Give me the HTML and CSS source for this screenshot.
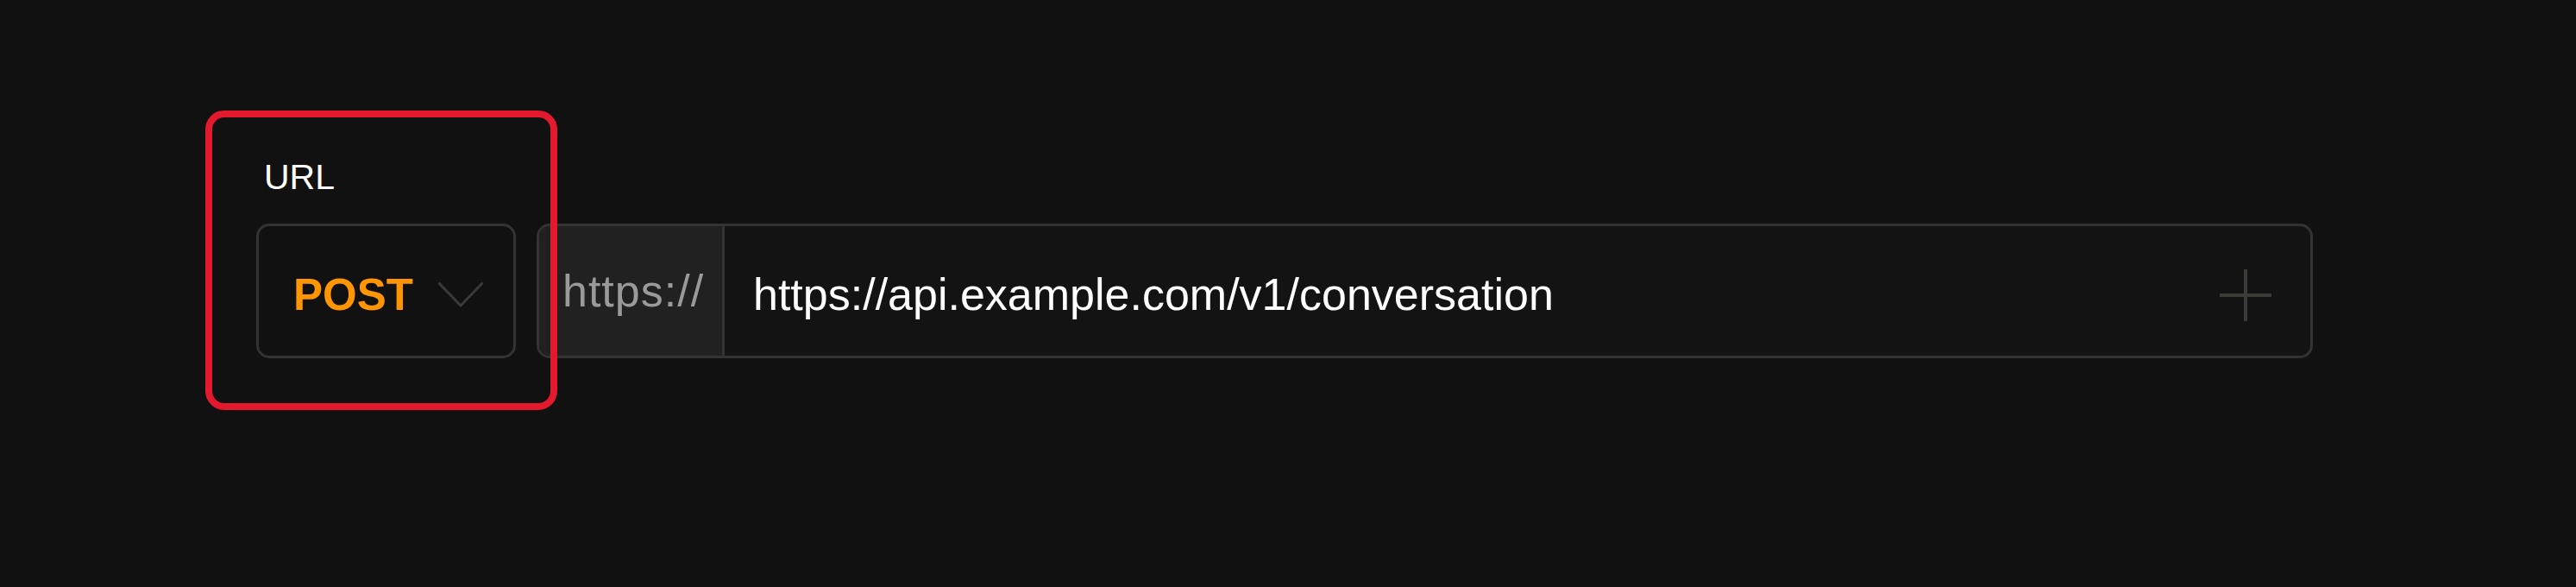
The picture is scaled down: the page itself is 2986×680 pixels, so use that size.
FILE: index.html
```html
<!DOCTYPE html>
<html>
<head>
<meta charset="utf-8">
<link rel="stylesheet" href="styles.css">
</head>
<body>
<div class="page">
  <div class="field">
    <div class="label">URL</div>
    <div class="row">
      <div class="method">
        <span class="method-name">POST</span>
        <svg class="chev" width="54" height="30" viewBox="0 0 54 30"><path d="M1.5 1.5 L27 28 L52.5 1.5" fill="none" stroke="#3a3a3a" stroke-width="3"/></svg>
      </div>
      <div class="url-input">
        <div class="prefix">https://</div>
        <div class="url-text">https://api.example.com/v1/conversation</div>
        <svg class="plus" width="60" height="60" viewBox="0 0 60 60"><path d="M30 1 V59 M1 30 H59" fill="none" stroke="#3b3b38" stroke-width="4" stroke-linecap="round"/></svg>
      </div>
    </div>
  </div>
  <div class="highlight"></div>
</div>
</body>
</html>
```
FILE: styles.css
```css
html, body {
  margin: 0;
  padding: 0;
  background: #111111;
  width: 2986px;
  height: 680px;
  overflow: hidden;
}
.page {
  position: relative;
  width: 2986px;
  height: 680px;
  font-family: "Liberation Sans", Arial, sans-serif;
}
.field {
  padding-top: 181px;
  padding-left: 297px;
  width: 2384px;
}
.label {
  font-size: 41px;
  line-height: 48px;
  color: #ffffff;
  padding-left: 9px;
  height: 78px;
}
.row {
  display: flex;
  gap: 24px;
  height: 156px;
}
.method {
  box-sizing: border-box;
  width: 301px;
  height: 156px;
  border: 3px solid #333333;
  border-radius: 15px;
  display: flex;
  align-items: center;
  padding-left: 40px;
  padding-top: 8px;
  gap: 28px;
}
.method-name {
  color: #ff9500;
  font-weight: bold;
  font-size: 51px;
}
.chev {
  display: block;
}
.url-input {
  box-sizing: border-box;
  flex: 1;
  height: 156px;
  border: 3px solid #333333;
  border-radius: 15px;
  background: #131313;
  display: flex;
  align-items: stretch;
  overflow: hidden;
}
.prefix {
  box-sizing: border-box;
  width: 215px;
  background: #212121;
  border-right: 3px solid #333333;
  color: #9a9a9a;
  font-size: 52px;
  letter-spacing: 1px;
  display: flex;
  align-items: center;
  padding-left: 27px;
}
.url-text {
  flex: 1;
  color: #ffffff;
  font-size: 52px;
  display: flex;
  align-items: center;
  padding-left: 33px;
  padding-top: 8px;
}
.plus {
  align-self: center;
  margin-right: 45px;
  margin-top: 10px;
}
.highlight {
  position: absolute;
  left: 238px;
  top: 128px;
  width: 408px;
  height: 347px;
  box-sizing: border-box;
  border: 8px solid #e31a2e;
  border-radius: 22px;
  pointer-events: none;
}
```
